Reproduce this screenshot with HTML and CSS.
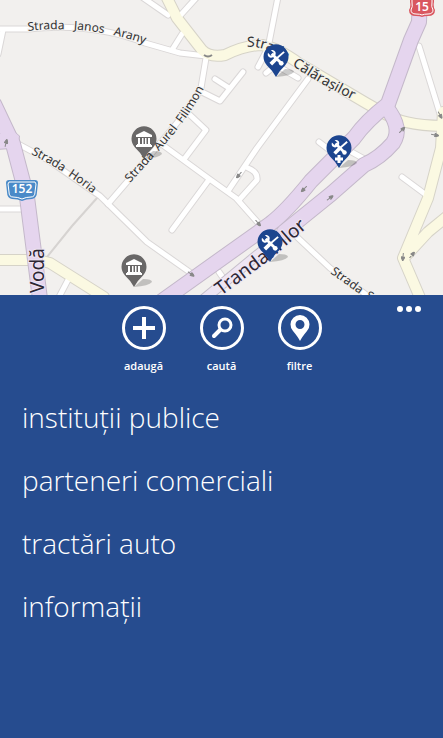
FILE: index.html
```html
<!DOCTYPE html>
<html lang="ro">
<head>
    <meta charset="UTF-8">
    <meta name="viewport" content="width=device-width, initial-scale=1.0">
    <title>Hartă</title>
    <link rel="stylesheet" href="styles.css">
</head>
<body>
    <main class="map">
        <svg class="map-canvas" viewBox="0 0 443 295" role="img" aria-label="Hartă">
            <defs>
                <g id="streets">
                    <path d="M0 29H28Q92 22 145 43L180 53L206 56"/>
                    <path d="M3 30L-2 54M142 -3L168 15M197 -3L178 18M182 34L172 50"/>
                    <path d="M206 58L201 88Q196 101 157 147L108 204"/>
                    <path d="M202 92L220 101L243 72M215 79L229 88"/>
                    <path d="M190 115L206 130L185 158"/>
                    <path d="M160 143L208 178L236 198L261 226M208 181L172 230"/>
                    <path d="M308 79L257 148L228 191M239 200L257 180Q258 172 248 168"/>
                    <path d="M20 145L48 160L100 196L147 242L198 278"/>
                    <path d="M0 209H24M69 278L58 299"/>
                    <path d="M278 -3L268 48L258 67M266 73L276 65L298 78"/>
                    <path d="M319 142L336 155M348 150L368 161M402 177L429 197M419 46L441 117"/>
                    <path d="M297 237L330 268L372 299M219 272L226 282"/>
                </g>
                <g id="avenues">
                    <path d="M166 -4L177 18L202 50Q210 58 225 55Q246 45 262 45Q278 48 300 64L366 103L382 112Q402 126 446 126"/>
                    <path d="M443 112L441 148L428 198L403 258L421 300M450 214L428 232L404 258"/>
                    <path d="M-4 260H38L50 263L104 297"/>
                </g>
                <g id="highways">
                    <path d="M-6 104L13 144L27 197L40 299"/>
                    <path d="M420 -4L419 22L411 40L388 104Q366 121 354 138L311 181Q286 212 270 224L162 301"/>
                    <path d="M386 107Q403 128 393 143Q380 158 364 165L331 194L284 232"/>
                </g>
                <symbol id="pin" viewBox="0 0 36 34">
                    <path class="pin-shadow" d="M13 33L22 25Q31 25 31 28Q28 32 13 33Z"/>
                    <path d="M13 33Q10 27 4 21.500A12.500 12.500 0 1 1 22 21.500Q16 27 13 33Z"/>
                </symbol>
                <symbol id="tools" viewBox="0 0 20 20">
                    <path d="M5 5L15 15" fill="none" stroke="#fff" stroke-width="3"/>
                    <path d="M4 1L7 4L6 6L4 7L1 4Q0 8 3 9Q5 10 7 8L9 6Q10 2 6 1Z" fill="#fff"/>
                    <path d="M18 3L10 10" fill="none" stroke="#fff" stroke-width="2"/>
                    <path d="M10 10L4 16" fill="none" stroke="#fff" stroke-width="4"/>
                    <circle cx="15" cy="15" r="2.500" fill="#fff"/>
                </symbol>
                <symbol id="institution" viewBox="0 0 18 18">
                    <path d="M9 1L17 5V7H1V5ZM3 8H5V14H3ZM7 8H8.500V14H7ZM10 8H11.500V14H10ZM13 8H15V14H13ZM2 14H16V15H17V17H1V15H2Z" fill="#fff"/>
                </symbol>
                <symbol id="arrow" viewBox="0 0 8 4">
                    <path d="M0 2H5M4 0L8 2L4 4Z" fill="#888" stroke="#888"/>
                </symbol>
                <path id="line-arany" d="M28 31Q96 23 160 50"/>
                <path id="line-filimon" d="M130 183L160 150Q192 115 208 80"/>
                <path id="line-horia" d="M31 154Q64 170 102 201"/>
                <path id="line-calarasilor" d="M247 47Q266 45 290 64Q320 85 368 107"/>
                <path id="line-trandafirilor" d="M221 296L272 258L330 208"/>
                <path id="line-strada" d="M330 273L362 296L420 330"/>
                <path id="line-voda" d="M44 293L44 220"/>
            </defs>

            <!-- străzi -->
            <path class="footway" d="M97 198L72 226L47 257"/>
            <use href="#streets" class="street-edge"/>
            <use href="#avenues" class="avenue-edge"/>
            <use href="#streets" class="street"/>
            <use href="#avenues" class="avenue"/>
            <path class="ramp-edge" d="M292 227L250 261L204 299"/>
            <path class="ramp" d="M292 227L250 261L204 299"/>
            <use href="#highways" class="highway-edge"/>
            <path class="junction-edge" d="M-2 133L8 133L13 130L20 136L19 146L11 149L-2 150Z"/>
            <use href="#highways" class="highway"/>
            <path class="junction" d="M-2 134L8 134L13 131L19 136L18 145L11 148L-2 149Z"/>

            <!-- sensuri de mers -->
            <use href="#arrow" x="300" y="187" width="8" height="4" transform="rotate(135 304 189)"/>
            <use href="#arrow" x="326" y="196" width="8" height="4" transform="rotate(-35 330 198)"/>
            <use href="#arrow" x="235" y="173" width="8" height="4" transform="rotate(130 239 175)"/>
            <use href="#arrow" x="254" y="221" width="8" height="4" transform="rotate(50 258 223)"/>
            <use href="#arrow" x="187" y="272" width="8" height="4" transform="rotate(35 191 274)"/>
            <use href="#arrow" x="399" y="255" width="8" height="4" transform="rotate(95 403 257)"/>
            <use href="#arrow" x="408" y="253" width="8" height="4" transform="rotate(-50 412 255)"/>
            <use href="#arrow" x="398" y="128" width="8" height="4" transform="rotate(-45 402 130)"/>
            <use href="#arrow" x="431" y="133" width="8" height="4" transform="rotate(10 435 135)"/>
            <use href="#arrow" x="436" y="113" width="8" height="4" transform="rotate(60 440 115)"/>
            <use href="#arrow" x="2" y="141" width="8" height="4" transform="rotate(-75 6 143)"/>
            <path d="M204 55Q208 58 212 55" fill="none" stroke="#888" stroke-width="2"/>

            <text class="road-name"><textPath href="#line-arany">Strada&#160;&#160; Janos&#160;&#160; Arany</textPath></text>
            <text class="road-name"><textPath href="#line-filimon">Strada&#160; Aurel&#160; Filimon</textPath></text>
            <text class="road-name"><textPath href="#line-horia">Strada&#160; Horia</textPath></text>
            <text class="road-name large"><textPath href="#line-calarasilor">Strada&#160; Călărașilor</textPath></text>
            <text class="road-name main"><textPath href="#line-trandafirilor">Trandafirilor</textPath></text>
            <text class="road-name"><textPath href="#line-strada">Strada&#160; S</textPath></text>
            <text class="road-name main"><textPath href="#line-voda">Vodă</textPath></text>

            <g class="shield blue">
                <path d="M9 180H35Q38 180 38 183L37 192Q37 198 32 199Q26 199 22 201Q18 199 12 199Q7 198 7 192L6 183Q6 180 9 180Z"/>
                <path class="shield-line" d="M9 182H35L36 184L35 192Q35 197 31 197Q26 197 22 199Q18 197 13 197Q9 197 9 192L8 184Z"/>
                <text x="22" y="193">152</text>
            </g>
            <g class="shield red">
                <path d="M410 -10H434V2Q433 7 435 10Q435 16 428 16Q424 16 422 17Q420 16 416 16Q409 16 409 10Q411 7 410 2Z"/>
                <path class="shield-line" d="M412 -10H432V2Q431 7 433 10Q433 14 428 14Q424 14 422 15Q420 14 416 14Q411 14 411 10Q413 7 412 2Z"/>
                <text x="422" y="11">15</text>
            </g>

            <!-- marcaje -->
            <g class="pin gray">
                <use href="#pin" x="131" y="126" width="36" height="34"/>
                <use href="#institution" x="135" y="130" width="18" height="18"/>
            </g>
            <g class="pin gray">
                <use href="#pin" x="121" y="254" width="36" height="34"/>
                <use href="#institution" x="125" y="258" width="18" height="18"/>
            </g>
            <g class="pin">
                <use href="#pin" x="263" y="44" width="36" height="34"/>
                <use href="#tools" x="267" y="49" width="19" height="19"/>
            </g>
            <g class="pin">
                <use href="#pin" x="326" y="135" width="36" height="34"/>
                <use href="#tools" x="331" y="139" width="18" height="18"/>
                <path d="M339 155V163M335 159H343" fill="none" stroke="#fff" stroke-width="3"/>
            </g>
            <g class="pin">
                <use href="#pin" x="257" y="229" width="36" height="34"/>
                <use href="#tools" x="261" y="234" width="19" height="19"/>
            </g>
        </svg>
    </main>

    <nav class="app-bar">
        <div class="actions">
            <div class="action-list">
                <button type="button" class="action">
                    <svg viewBox="0 0 44 44" aria-hidden="true">
                        <circle cx="22" cy="22" r="20.500"/>
                        <path class="plus" d="M22 11V33M11 22H33"/>
                    </svg>
                    <span>adaugă</span>
                </button>
                <button type="button" class="action">
                    <svg viewBox="0 0 44 44" aria-hidden="true">
                        <circle cx="22" cy="22" r="20.500"/>
                        <circle cx="25" cy="19" r="6"/>
                        <path class="handle" d="M20 24L14 30"/>
                    </svg>
                    <span>caută</span>
                </button>
                <button type="button" class="action">
                    <svg viewBox="0 0 44 44" aria-hidden="true">
                        <circle cx="22" cy="22" r="20.500"/>
                        <path class="solid" fill-rule="evenodd" d="M22 35Q20 31 15 25A9.500 9.500 0 1 1 29 25Q24 31 22 35ZM22 14A4.500 4.500 0 1 0 22 23A4.500 4.500 0 1 0 22 14Z"/>
                    </svg>
                    <span>filtre</span>
                </button>
            </div>
            <button type="button" class="more" aria-label="mai multe">
                <i></i><i></i><i></i>
            </button>
        </div>
        <ul class="menu">
            <li><a href="#institutii">instituții publice</a></li>
            <li><a href="#parteneri">parteneri comerciali</a></li>
            <li><a href="#tractari">tractări auto</a></li>
            <li><a href="#informatii">informații</a></li>
        </ul>
    </nav>
</body>
</html>
```
FILE: styles.css
```css
:root {
    --bar-color: #264c8f;
    --pin-color: #1c458f;
    --land-color: #f2f0ee;
}

* {
    box-sizing: border-box;
}

body {
    margin: 0;
    min-height: 100vh;
    display: flex;
    flex-direction: column;
    background: var(--bar-color);
    font-family: "Open Sans", "Noto Sans", sans-serif;
}

.map {
    background: var(--land-color);
}

.map-canvas {
    display: block;
    width: 100%;
    height: auto;
}

/* drumuri */
.street,
.street-edge,
.avenue,
.avenue-edge,
.highway,
.highway-edge,
.ramp,
.ramp-edge,
.footway {
    fill: none;
    stroke-linecap: round;
    stroke-linejoin: round;
}

.street {
    stroke: #fff;
    stroke-width: 5px;
}

.street-edge {
    stroke: #dad7d7;
    stroke-width: 7px;
}

.avenue {
    stroke: #fbf9e2;
    stroke-width: 10px;
}

.avenue-edge {
    stroke: #d6d3c8;
    stroke-width: 12px;
}

.highway {
    stroke: #e5d5ee;
    stroke-width: 14px;
}

.highway-edge {
    stroke: #c4b8ca;
    stroke-width: 16px;
}

.ramp {
    stroke: #eee5f3;
    stroke-width: 9px;
}

.ramp-edge {
    stroke: #c6bfca;
    stroke-width: 11px;
}

.junction {
    fill: #e5d5ee;
}

.junction-edge {
    fill: #c4b8ca;
}

.footway {
    stroke: #d6d3d1;
    stroke-width: 2px;
}

.road-name {
    fill: #333;
    stroke: var(--land-color);
    stroke-width: 2px;
    paint-order: stroke;
    font-family: "Noto Sans", sans-serif;
    font-size: 12px;
}

.road-name.large {
    font-size: 14px;
}

.road-name.main {
    fill: #2c2633;
    stroke: #eee5f3;
    font-size: 19px;
}

.shield text {
    fill: #fff;
    stroke: none;
    font-family: "Noto Sans", sans-serif;
    font-size: 12px;
    font-weight: 600;
    text-anchor: middle;
}

.shield.blue {
    fill: #4a8ac8;
}

.shield.red {
    fill: #d9565f;
}

.shield-line {
    fill: none;
    stroke: #fff;
}

.pin {
    fill: var(--pin-color);
}

.pin.gray {
    fill: #696767;
}

.pin-shadow {
    fill: #000;
    opacity: 0.2;
}

/* bara de jos */
.app-bar {
    flex: 1;
    color: #fff;
    background: var(--bar-color);
}

.actions {
    display: grid;
    grid-template-columns: 1fr auto 1fr;
    align-items: start;
    padding: 11px 16px 0;
}

.action-list {
    grid-column: 2;
    display: flex;
}

button {
    padding: 0;
    border: none;
    color: inherit;
    background: none;
    font: inherit;
    cursor: pointer;
}

.action {
    width: 78px;
    display: flex;
    flex-direction: column;
    align-items: center;
    gap: 8px;
    font-size: 11px;
    font-weight: 600;
    line-height: 16px;
}

.action svg {
    width: 44px;
    height: 44px;
    fill: none;
    stroke: #fff;
    stroke-width: 3px;
}

.action .plus {
    stroke-width: 4px;
}

.action .handle {
    stroke-width: 4px;
    stroke-linecap: round;
}

.action .solid {
    fill: #fff;
    stroke: none;
}

.more {
    justify-self: end;
    display: flex;
    gap: 3px;
    padding: 0 6px 8px;
}

.more i {
    width: 6px;
    height: 6px;
    border-radius: 50%;
    background: #fff;
}

.menu {
    margin: 0;
    padding: 12px 22px;
    list-style: none;
}

.menu a {
    display: block;
    color: inherit;
    text-decoration: none;
    font-size: 28px;
    font-weight: 300;
    line-height: 63px;
}
```
